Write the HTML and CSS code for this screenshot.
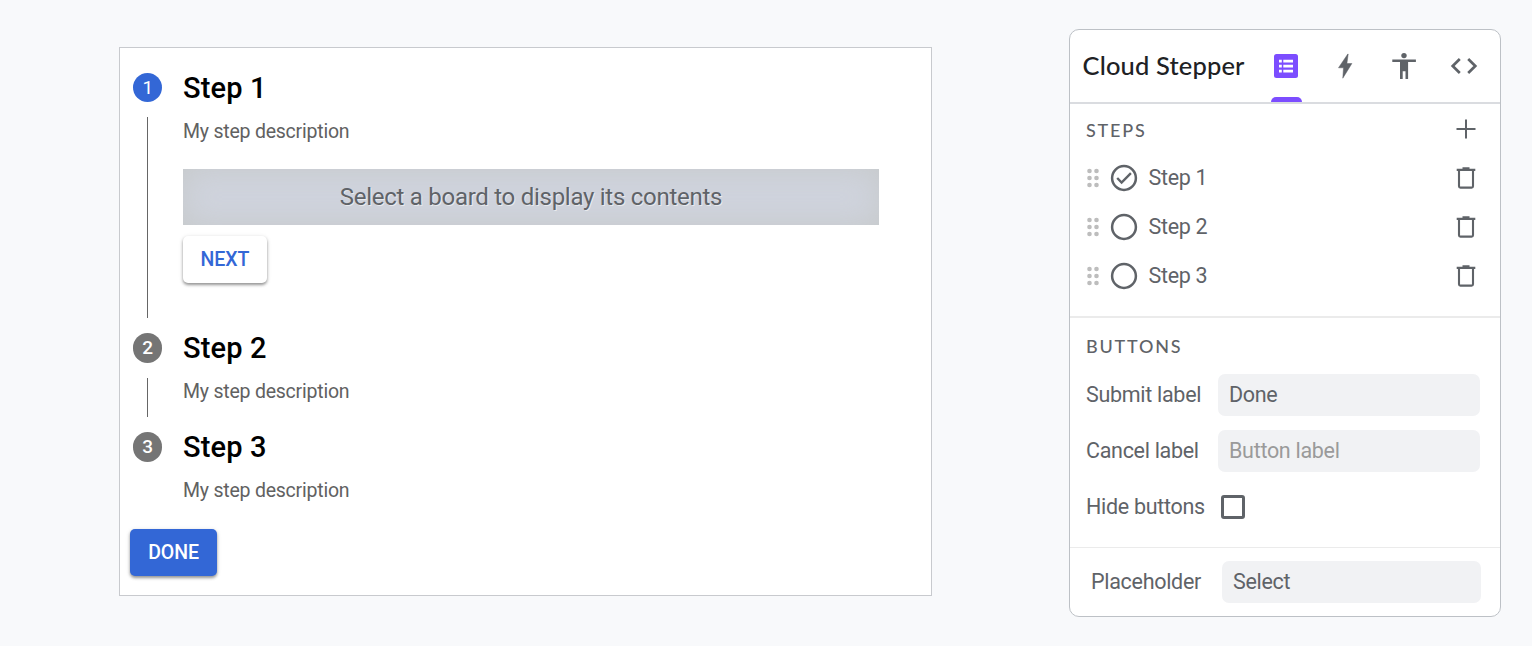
FILE: index.html
```html
<!DOCTYPE html>
<html lang="en">
<head>
<meta charset="utf-8">
<title>Cloud Stepper</title>
<link rel="stylesheet" href="styles.css">
</head>
<body>
<main class="page">
  <section class="board">
    <div class="step step-open">
      <div class="rail"><span class="badge active">1</span><span class="line"></span></div>
      <div class="content">
        <h2 class="step-title">Step 1</h2>
        <p class="desc">My step description</p>
        <div class="slot">Select a board to display its contents</div>
        <button class="btn next">NEXT</button>
      </div>
    </div>
    <div class="step step-closed">
      <div class="rail"><span class="badge">2</span><span class="line"></span></div>
      <div class="content">
        <h2 class="step-title">Step 2</h2>
        <p class="desc">My step description</p>
      </div>
    </div>
    <div class="step step-last">
      <div class="rail"><span class="badge">3</span></div>
      <div class="content">
        <h2 class="step-title">Step 3</h2>
        <p class="desc">My step description</p>
      </div>
    </div>
    <button class="btn done">DONE</button>
  </section>

  <aside class="panel">
    <header class="head">
      <h1 class="name">Cloud Stepper</h1>
      <nav class="tabs">
        <span class="tab selected"><svg width="24" height="24" viewBox="0 0 24 24"><rect width="24" height="24" rx="2.5" fill="#7c4dff"/><path d="M5 5.7h2.8v2.8H5zm4.3 0H19v2.8H9.3zM5 10.7h2.8v2.8H5zm4.3 0H19v2.8H9.3zM5 15.7h2.8v2.8H5zm4.3 0H19v2.8H9.3z" fill="#fff"/></svg></span>
        <span class="tab"><svg width="24" height="26" viewBox="0 0 24 26"><path d="M14.8 1 5.500 14.800h5L9.800 25.200 18.900 10.500h-5l1.300-9.500z" fill="#5f6368" stroke="#5f6368" stroke-width=".5"/></svg></span>
        <span class="tab"><svg width="24" height="28" viewBox="0 0 24 28"><circle cx="12" cy="3.600" r="2.700" fill="#5f6368"/><path d="M.3 7.500h23.600v2.600h-7.800v17h-2.600v-7.900h-2.800v7.900H8v-17H.3z" fill="#5f6368"/></svg></span>
        <span class="tab"><svg width="28" height="18" viewBox="0 0 28 18"><path d="M9.800 2 2.700 9l7.100 7M18.200 2 25.300 9l-7.100 7" fill="none" stroke="#5f6368" stroke-width="2.700"/></svg></span>
      </nav>
    </header>

    <section class="group steps">
      <div class="group-head"><h3 class="caption">STEPS</h3><svg width="20" height="20" viewBox="0 0 20 20"><path d="M10 .5v19M.5 10h19" stroke="#5f6368" stroke-width="2"/></svg></div>
      <div class="item">
        <svg class="grip" width="12" height="20" viewBox="0 0 12 20"><g fill="#bdbdbd"><circle cx="2.500" cy="3" r="2.300"/><circle cx="9.500" cy="3" r="2.300"/><circle cx="2.500" cy="10" r="2.300"/><circle cx="9.500" cy="10" r="2.300"/><circle cx="2.500" cy="17" r="2.300"/><circle cx="9.500" cy="17" r="2.300"/></g></svg>
        <svg class="radio" width="28" height="28" viewBox="0 0 28 28"><circle cx="14" cy="14" r="11.900" fill="none" stroke="#5f6368" stroke-width="2.500"/><path d="m7.200 14 4.400 4.500 9.300-9.300" fill="none" stroke="#5f6368" stroke-width="2.400"/></svg>
        <span class="label">Step 1</span>
        <svg class="trash" width="20" height="22" viewBox="0 0 20 22"><path d="M6.500.3h7v1.500h5.800V4H.7V1.800h5.800z" fill="#5f6368"/><path d="M3 4v15.200q0 1.400 1.400 1.400h11.200q1.400 0 1.400-1.400V4" fill="none" stroke="#5f6368" stroke-width="2.100"/></svg>
      </div>
      <div class="item">
        <svg class="grip" width="12" height="20" viewBox="0 0 12 20"><g fill="#bdbdbd"><circle cx="2.500" cy="3" r="2.300"/><circle cx="9.500" cy="3" r="2.300"/><circle cx="2.500" cy="10" r="2.300"/><circle cx="9.500" cy="10" r="2.300"/><circle cx="2.500" cy="17" r="2.300"/><circle cx="9.500" cy="17" r="2.300"/></g></svg>
        <svg class="radio" width="28" height="28" viewBox="0 0 28 28"><circle cx="14" cy="14" r="11.900" fill="none" stroke="#5f6368" stroke-width="2.500"/></svg>
        <span class="label">Step 2</span>
        <svg class="trash" width="20" height="22" viewBox="0 0 20 22"><path d="M6.500.3h7v1.500h5.800V4H.7V1.800h5.800z" fill="#5f6368"/><path d="M3 4v15.200q0 1.400 1.400 1.400h11.200q1.400 0 1.400-1.400V4" fill="none" stroke="#5f6368" stroke-width="2.100"/></svg>
      </div>
      <div class="item">
        <svg class="grip" width="12" height="20" viewBox="0 0 12 20"><g fill="#bdbdbd"><circle cx="2.500" cy="3" r="2.300"/><circle cx="9.500" cy="3" r="2.300"/><circle cx="2.500" cy="10" r="2.300"/><circle cx="9.500" cy="10" r="2.300"/><circle cx="2.500" cy="17" r="2.300"/><circle cx="9.500" cy="17" r="2.300"/></g></svg>
        <svg class="radio" width="28" height="28" viewBox="0 0 28 28"><circle cx="14" cy="14" r="11.900" fill="none" stroke="#5f6368" stroke-width="2.500"/></svg>
        <span class="label">Step 3</span>
        <svg class="trash" width="20" height="22" viewBox="0 0 20 22"><path d="M6.500.3h7v1.500h5.800V4H.7V1.800h5.800z" fill="#5f6368"/><path d="M3 4v15.200q0 1.400 1.400 1.400h11.200q1.400 0 1.400-1.400V4" fill="none" stroke="#5f6368" stroke-width="2.100"/></svg>
      </div>
    </section>

    <section class="group buttons">
      <h3 class="caption">BUTTONS</h3>
      <div class="field"><span class="label">Submit label</span><div class="input">Done</div></div>
      <div class="field"><span class="label">Cancel label</span><div class="input empty">Button label</div></div>
      <div class="field"><span class="label">Hide buttons</span><span class="check"></span></div>
    </section>

    <section class="group extra">
      <div class="field"><span class="label">Placeholder</span><div class="input">Select</div></div>
    </section>
  </aside>
</main>
</body>
</html>
```
FILE: styles.css
```css
* { box-sizing: border-box; }
body { margin: 0; background: #f8f9fb; font-family: Roboto, "Liberation Sans", sans-serif; }
h1, h2, h3, p { margin: 0; font-weight: 400; }
svg { display: block; flex: none; }
.page { display: flex; align-items: flex-start; height: 646px; padding-left: 119px; overflow: hidden; }

.board { width: 813px; height: 549px; margin-top: 47px; padding: 24.500px 0 0 10.400px; background: #fff; border: 1px solid #c8cace; }
.step { display: flex; gap: 20px; padding-left: 2.600px; }
.step-open { height: 260.500px; }
.step-closed { height: 99px; }
.step-last { height: 97px; }
.rail { width: 30px; display: flex; flex-direction: column; }
.badge { width: 29.500px; height: 29.500px; border-radius: 50%; background: #757575; color: #fff; font-size: 19px; font-weight: 500; line-height: 29px; text-align: center; }
.badge.active { background: #3367d6; font-weight: 400; }
.line { flex: 1; width: 1.200px; margin: 15px 0 15px 14px; background: #666; }
.content { width: 696px; }
.step-title { color: #000; font-size: 29px; font-weight: 500; letter-spacing: .15px; line-height: 31px; }
.desc { margin-top: 16px; color: #616161; font-size: 19.500px; letter-spacing: -.22px; line-height: 24px; }
.slot { height: 55.500px; margin-top: 25.500px; line-height: 57px; text-align: center; font-size: 24px; letter-spacing: -.27px; color: #5f6368; background: #d0d4de; box-shadow: inset 0 0 32px rgba(190, 192, 184, .5); text-shadow: 1px 1px 0 #e8eaed; }
.btn { display: block; border: 0; border-radius: 5px; font: 500 19.500px/46px Roboto, sans-serif; height: 47px; padding: 0; text-align: center; box-shadow: 0 2px 3px rgba(0, 0, 0, .36), 0 1px 5px rgba(0, 0, 0, .12); }
.next { width: 84px; margin-top: 11.500px; line-height: 47px; color: #3367d6; background: #fff; }
.done { width: 86.500px; color: #fff; background: #3367d6; }

.panel { width: 432px; height: 588px; margin: 29px 0 0 137px; background: #fff; border: 1px solid #bdc1c6; border-radius: 10px; }
.head { display: flex; height: 74px; border-bottom: 2px solid #dadce0; }
.name { width: 186px; padding-left: 12.500px; color: #202124; font: 500 25.500px/70px Lato, sans-serif; letter-spacing: .15px; white-space: nowrap; }
.tabs { display: flex; }
.tab { width: 59.300px; display: flex; align-items: center; justify-content: center; }
.selected { position: relative; }
.selected::after { content: ""; position: absolute; left: 14.500px; bottom: 0; width: 31px; height: 5px; border-radius: 5px 5px 0 0; background: #7c4dff; }
.group { color: #5f6368; border-bottom: 2px solid #ebebeb; padding: 0 20px 0 16px; }
.steps { height: 214px; padding-right: 24.500px; }
.group-head { display: flex; justify-content: space-between; align-items: center; height: 50px; }
.caption { padding-top: 1px; font: 500 18px/50px Lato, sans-serif; letter-spacing: 1.800px; }
.item { display: flex; align-items: center; height: 49px; }
.steps .group-head + .item { margin-top: -.5px; }
.grip { margin-left: .6px; }
.radio { margin-left: 11.400px; }
.item .label { margin-left: 10.500px; flex: 1; }
.label, .input { font-size: 21.500px; letter-spacing: -.3px; line-height: 42px; white-space: nowrap; }
.buttons { height: 230px; padding-top: 3px; border-bottom-width: 1px; }
.buttons .caption { height: 46px; padding-top: 0; }
.field { display: flex; align-items: center; }
.buttons .field { height: 56px; }
.buttons .field .label { line-height: 40px; }
.field .label { width: 132px; }
.input { flex: 1; height: 42px; padding-left: 11px; background: #f1f2f4; border-radius: 7px; }
.empty { color: #9a9a9a; }
.check { width: 24px; height: 24px; margin: 0 0 1px 3px; border: 3px solid #5f6368; border-radius: 3px; }
.buttons .input { line-height: 41px; }
.extra { border: 0; padding: 13px 19px 0 21px; }
.extra .label { width: 131px; }
```
